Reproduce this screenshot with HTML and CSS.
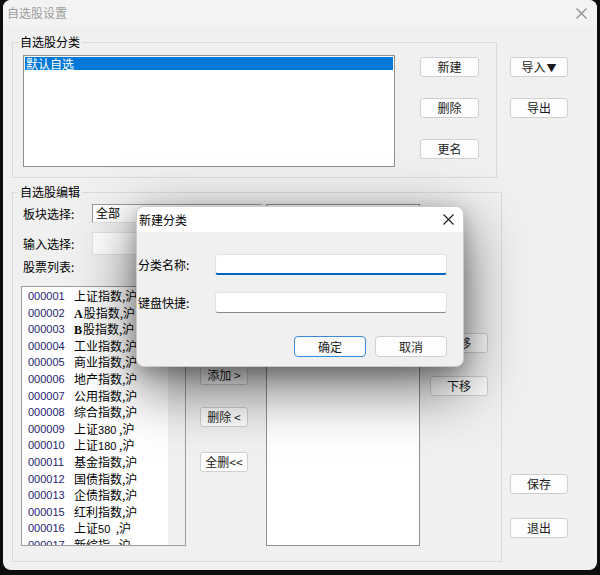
FILE: index.html
```html
<!DOCTYPE html>
<html lang="zh-CN">
<head>
    <meta charset="UTF-8">
    <meta name="viewport" content="width=device-width, initial-scale=1.0">
    <title>自选股设置</title>
    <link rel="stylesheet" href="styles.css">
</head>
<body>
    <div class="window">
        <div class="titlebar">
            <span class="title">自选股设置</span>
            <svg class="close-x" width="11" height="11" viewBox="0 0 11 11">
                <path d="M0.5 0.5 L10.5 10.5 M10.5 0.5 L0.5 10.5" stroke="#8c8c8c" stroke-width="1.1" fill="none"/>
            </svg>
        </div>

        <div class="content">
            <div class="left-col">
                <fieldset class="group group-cat">
                    <legend>自选股分类</legend>
                    <div class="cat-body">
                        <div class="listbox cat-list">
                            <div class="cat-item selected">默认自选</div>
                        </div>
                        <div class="cat-btns">
                            <button class="btn">新建</button>
                            <button class="btn">删除</button>
                            <button class="btn">更名</button>
                        </div>
                    </div>
                </fieldset>

                <fieldset class="group group-edit">
                    <legend>自选股编辑</legend>
                    <div class="edit-body">
                        <div class="edit-left">
                            <div class="form-row">
                                <label>板块选择:</label>
                                <div class="combo">全部</div>
                            </div>
                            <div class="form-row row-input">
                                <label>输入选择:</label>
                                <div class="field"></div>
                            </div>
                            <div class="form-row row-label">
                                <label>股票列表:</label>
                            </div>
                            <div class="list-row">
                                <div class="listbox stock-list">
                                    <div class="stock-items">
                                        <div class="stock"><span class="code">000001</span><span class="name">上证指数,沪</span></div>
                                        <div class="stock"><span class="code">000002</span><span class="name"><b class="latin">A</b>股指数,沪</span></div>
                                        <div class="stock"><span class="code">000003</span><span class="name"><b class="latin">B</b>股指数,沪</span></div>
                                        <div class="stock"><span class="code">000004</span><span class="name">工业指数,沪</span></div>
                                        <div class="stock"><span class="code">000005</span><span class="name">商业指数,沪</span></div>
                                        <div class="stock"><span class="code">000006</span><span class="name">地产指数,沪</span></div>
                                        <div class="stock"><span class="code">000007</span><span class="name">公用指数,沪</span></div>
                                        <div class="stock"><span class="code">000008</span><span class="name">综合指数,沪</span></div>
                                        <div class="stock"><span class="code">000009</span><span class="name">上证<span class="num">380</span> ,沪</span></div>
                                        <div class="stock"><span class="code">000010</span><span class="name">上证<span class="num">180</span> ,沪</span></div>
                                        <div class="stock"><span class="code">000011</span><span class="name">基金指数,沪</span></div>
                                        <div class="stock"><span class="code">000012</span><span class="name">国债指数,沪</span></div>
                                        <div class="stock"><span class="code">000013</span><span class="name">企债指数,沪</span></div>
                                        <div class="stock"><span class="code">000015</span><span class="name">红利指数,沪</span></div>
                                        <div class="stock"><span class="code">000016</span><span class="name">上证<span class="num">50</span>&nbsp;&nbsp;,沪</span></div>
                                        <div class="stock"><span class="code">000017</span><span class="name">新综指&nbsp;&nbsp;,沪</span></div>
                                    </div>
                                    <div class="scroll-track"></div>
                                </div>
                                <div class="move-btns">
                                    <button class="btn btn-add">添加 &gt;</button>
                                    <button class="btn btn-del">删除 &lt;</button>
                                    <button class="btn btn-clear">全删&lt;&lt;</button>
                                </div>
                            </div>
                        </div>

                        <div class="listbox picked-list"></div>

                        <div class="order-btns">
                            <button class="btn btn-up">上移</button>
                            <button class="btn btn-down">下移</button>
                        </div>
                    </div>
                </fieldset>
            </div>

            <div class="right-col">
                <button class="btn btn-import">导入<span class="arrow">▼</span></button>
                <button class="btn btn-export">导出</button>
                <button class="btn btn-save">保存</button>
                <button class="btn btn-quit">退出</button>
            </div>
        </div>
    </div>

    <!-- 新建分类 dialog -->
    <div class="modal">
        <div class="modal-title">
            <span>新建分类</span>
            <svg class="modal-x" width="11" height="11" viewBox="0 0 11 11">
                <path d="M0.5 0.5 L10.5 10.5 M10.5 0.5 L0.5 10.5" stroke="#1a1a1a" stroke-width="1.1" fill="none"/>
            </svg>
        </div>
        <div class="modal-body">
            <div class="modal-row">
                <label>分类名称:</label>
                <div class="m-field focused"></div>
            </div>
            <div class="modal-row row-second">
                <label>键盘快捷:</label>
                <div class="m-field"></div>
            </div>
            <div class="modal-btns">
                <button class="m-btn default">确定</button>
                <button class="m-btn">取消</button>
            </div>
        </div>
    </div>
</body>
</html>
```

FILE: styles.css
```css
body {
    margin: 0;
    background-color: #0e0e0e;
    font-family: "Noto Sans CJK SC", "Liberation Sans", sans-serif;
    font-size: 12px;
    color: #000;
}
.window {
    margin-left: 3px;
    width: 594px;
    height: 570px;
    background-color: #f0f0f0;
    border-radius: 8px;
    overflow: hidden;
}
.titlebar {
    height: 26px;
    background-color: #f3f3f3;
    display: flex;
    align-items: center;
    justify-content: space-between;
    padding: 0 10px 0 4px;
}
.title {
    color: #9d9d9d;
    line-height: 14px;
}
.content {
    display: flex;
    padding-left: 9px;
}
.left-col {
    width: 490px;
}
.group {
    box-sizing: border-box;
    margin: 0;
    border: 1px solid #dadada;
    min-width: 0;
}
.group legend {
    padding: 0 2px;
    line-height: 14px;
}
.group-cat {
    width: 485px;
    margin-top: 9px;
    padding: 6px 17px 10px 10px;
}
.group-cat legend {
    margin-left: -5px;
}
.cat-body {
    display: flex;
    gap: 25px;
}
.listbox {
    box-sizing: border-box;
    background-color: #fff;
    border: 1px solid #8f8f8f;
}
.cat-list {
    width: 372px;
    height: 112px;
    padding: 1px;
}
.cat-item {
    line-height: 13px;
    padding-left: 1px;
}
.cat-item.selected {
    background-color: #0078d7;
    color: #fff;
}
.cat-btns {
    display: flex;
    flex-direction: column;
    padding-top: 2px;
    gap: 21px;
}
.btn {
    box-sizing: border-box;
    width: 59px;
    height: 20px;
    padding: 0;
    background-color: #fdfdfd;
    border: 1px solid #d0d0d0;
    border-radius: 3px;
    font-family: inherit;
    font-size: 12px;
    line-height: 16px;
    color: #1b1b1b;
}
.group-edit {
    width: 490px;
    margin-top: 7px;
    padding: 5px 13px 15px 8px;
}
.group-edit legend {
    margin-left: -3px;
}
.edit-body {
    display: flex;
}
.edit-left {
    width: 241px;
}
.form-row {
    display: flex;
    align-items: center;
    height: 19px;
}
.form-row label {
    width: 69px;
    padding-left: 2px;
    line-height: 14px;
}
.combo {
    box-sizing: border-box;
    width: 170px;
    height: 19px;
    background-color: #fff;
    border: 1px solid #e2e2e2;
    border-top-color: #9a9a9a;
    border-left-color: #9a9a9a;
    padding-left: 3px;
    line-height: 16px;
}
.row-input {
    height: 23px;
    margin-top: 9px;
}
.field {
    box-sizing: border-box;
    width: 170px;
    height: 23px;
    background-color: #fff;
    border: 1px solid #e2e2e2;
}
.row-label {
    height: 16px;
    margin-top: 4px;
}
.list-row {
    display: flex;
    margin-top: 11px;
}
.stock-list {
    width: 165px;
    height: 260px;
    display: flex;
    overflow: hidden;
    border-color: #9c9c9c;
}
.stock-items {
    flex: 1;
    overflow: hidden;
    padding-top: 1px;
}
.stock {
    display: flex;
    height: 16.6px;
    line-height: 16.6px;
    white-space: nowrap;
}
.code {
    width: 46px;
    padding-left: 6px;
    font-family: "Liberation Sans", sans-serif;
    font-size: 11px;
    color: #24246e;
}
.name {
    font-size: 12px;
}
.latin {
    font-family: "Liberation Serif", serif;
    font-size: 12px;
    margin-right: 1px;
}
.num {
    font-family: "Liberation Sans", sans-serif;
    font-size: 11px;
}
.scroll-track {
    width: 17px;
    background-color: #f0f0f0;
}
.move-btns {
    display: flex;
    flex-direction: column;
    margin-left: 14px;
}
.move-btns .btn {
    width: 48px;
}
.btn-add {
    margin-top: 79px;
}
.btn-del {
    margin-top: 22px;
}
.btn-clear {
    margin-top: 25px;
}
.picked-list {
    width: 154px;
    height: 342px;
    margin-left: 4px;
}
.order-btns {
    display: flex;
    flex-direction: column;
    margin-left: 10px;
}
.order-btns .btn {
    width: 58px;
}
.btn-up {
    margin-top: 129px;
}
.btn-down {
    margin-top: 23px;
}
.right-col {
    display: flex;
    flex-direction: column;
    margin-left: 8px;
    padding-top: 31px;
}
.right-col .btn {
    width: 58px;
}
.arrow {
    font-size: 10px;
    margin-left: 1px;
}
.btn-export {
    margin-top: 21px;
}
.btn-save {
    margin-top: 356px;
}
.btn-quit {
    margin-top: 24px;
}

/* dialog */
.modal {
    position: absolute;
    left: 136px;
    top: 206px;
    box-sizing: border-box;
    width: 328px;
    height: 161px;
    background-color: #f0f0f0;
    border: 1px solid #cbcbcb;
    border-radius: 8px;
    box-shadow: 0 20px 60px rgba(0, 0, 0, 0.6), 0 6px 18px rgba(0, 0, 0, 0.22);
    overflow: hidden;
}
.modal-title {
    height: 25px;
    background-color: #fff;
    display: flex;
    align-items: center;
    justify-content: space-between;
    padding: 0 9px 0 2px;
    line-height: 14px;
}
.modal-body {
    padding: 0 16px 0 1px;
}
.modal-row {
    display: flex;
    align-items: center;
    margin-top: 22px;
}
.modal-row label {
    width: 77px;
    line-height: 14px;
}
.m-field {
    box-sizing: border-box;
    width: 232px;
    height: 21px;
    background-color: #fff;
    border: 1px solid #e3e3e3;
    border-bottom-color: #8a8a8a;
    border-radius: 3px;
}
.m-field.focused {
    border-bottom: 2px solid #0067c0;
}
.row-second {
    margin-top: 17px;
}
.modal-btns {
    display: flex;
    justify-content: flex-end;
    gap: 9px;
    margin-top: 23px;
}
.m-btn {
    box-sizing: border-box;
    width: 72px;
    height: 21px;
    padding: 0;
    background-color: #fdfdfd;
    border: 1px solid #d0d0d0;
    border-radius: 4px;
    font-family: inherit;
    font-size: 12px;
    line-height: 17px;
    color: #1b1b1b;
}
.m-btn.default {
    border-color: #3a8ad6;
}
```
